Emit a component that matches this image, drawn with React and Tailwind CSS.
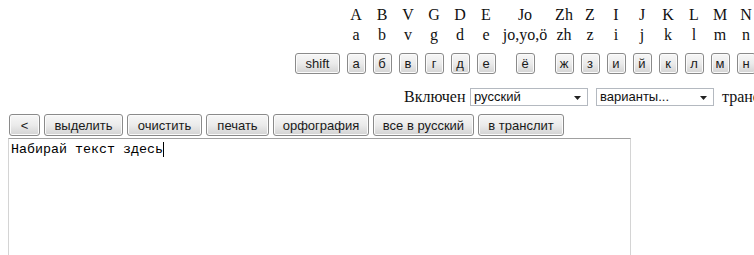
const letters = [
  { up: "A", low: "a", ru: "а" },
  { up: "B", low: "b", ru: "б" },
  { up: "V", low: "v", ru: "в" },
  { up: "G", low: "g", ru: "г" },
  { up: "D", low: "d", ru: "д" },
  { up: "E", low: "e", ru: "е" },
  { up: "Jo", low: "jo,yo,ö", ru: "ё", wide: true },
  { up: "Zh", low: "zh", ru: "ж" },
  { up: "Z", low: "z", ru: "з" },
  { up: "I", low: "i", ru: "и" },
  { up: "J", low: "j", ru: "й" },
  { up: "K", low: "k", ru: "к" },
  { up: "L", low: "l", ru: "л" },
  { up: "M", low: "m", ru: "м" },
  { up: "N", low: "n", ru: "н" },
  { up: "O", low: "o", ru: "о" },
  { up: "P", low: "p", ru: "п" },
];

const tools = [
  { label: "<", w: "w-[31px]" },
  { label: "выделить", w: "w-[79px]" },
  { label: "очистить", w: "w-[75px]" },
  { label: "печать", w: "w-[63px]" },
  { label: "орфография", w: "w-[96px]" },
  { label: "все в русский", w: "w-[101px]" },
  { label: "в транслит", w: "w-[86px]" },
];

const btn =
  "border border-[#8a8a8a] rounded-[3px] bg-linear-to-b from-[#f7f7f7] via-[#ebebeb] to-[#d3d3d3] text-[#1a1a1a] font-['Liberation_Sans',Arial,sans-serif] text-[13px] leading-none flex items-center justify-center shadow-[inset_0_0_0_1px_#fbfbfb]";

function Select({ value }) {
  return (
    <div className="relative h-[18px] w-[118px] shrink-0 border border-[#b4b9c0] bg-white flex items-center pl-[3px] font-['Liberation_Sans',Arial,sans-serif] text-[13px] text-[#111]">
      {value}
      <svg className="absolute right-[6px] top-[7px]" width="7" height="4" viewBox="0 0 7 4">
        <path d="M0 0h7L3.5 4z" fill="#222" />
      </svg>
    </div>
  );
}

export default function App() {
  return (
    <div className="w-[754px] h-[255px] overflow-hidden bg-white">
      <div className="w-[1000px]">
        {/* transliteration hints */}
        <div className="flex pl-[295px] pt-[5px] font-['Liberation_Serif','Times_New_Roman',serif] text-[16px] text-[#111]">
          <div className="w-[48px] flex flex-col">
            <div className="h-[40px]" />
            <button className={`${btn} mt-[8px] h-[21px] w-[45px]`}>shift</button>
          </div>
          {letters.map((l) => (
            <div
              key={l.ru}
              className={`${l.wide ? "w-[52px]" : "w-[26px]"} flex flex-col items-center`}
            >
              <div className="h-[20px] leading-[20px] whitespace-nowrap">{l.up}</div>
              <div className="h-[20px] leading-[20px] whitespace-nowrap">{l.low}</div>
              <button className={`${btn} mt-[8px] h-[21px] w-[19px]`}>{l.ru}</button>
            </div>
          ))}
        </div>

        {/* language row */}
        <div className="flex items-center mt-[14px] pl-[404px] h-[18px] font-['Liberation_Serif','Times_New_Roman',serif] text-[16px] text-[#111]">
          <span className="w-[66px] shrink-0">Включен</span>
          <Select value="русский" />
          <div className="w-[8px] shrink-0" />
          <Select value="варианты..." />
          <span className="ml-[8px] whitespace-nowrap">транслит</span>
        </div>

        {/* toolbar */}
        <div className="flex gap-[4px] pl-[9px] mt-[8px]">
          {tools.map((t) => (
            <button key={t.label} className={`${btn} ${t.w} h-[22px]`}>
              {t.label}
            </button>
          ))}
        </div>

        {/* editor */}
        <div className="ml-[8px] mt-[2px] w-[623px] h-[140px] border border-[#d4d4d4] border-t-[#a0a0a0] px-[2px] pt-[3px] font-['Liberation_Mono','Courier_New',monospace] text-[13.33px] leading-[15px] text-black">
          Набирай текст здесь
          <span className="inline-block w-px h-[15px] bg-black align-top" />
        </div>
      </div>
    </div>
  );
}
